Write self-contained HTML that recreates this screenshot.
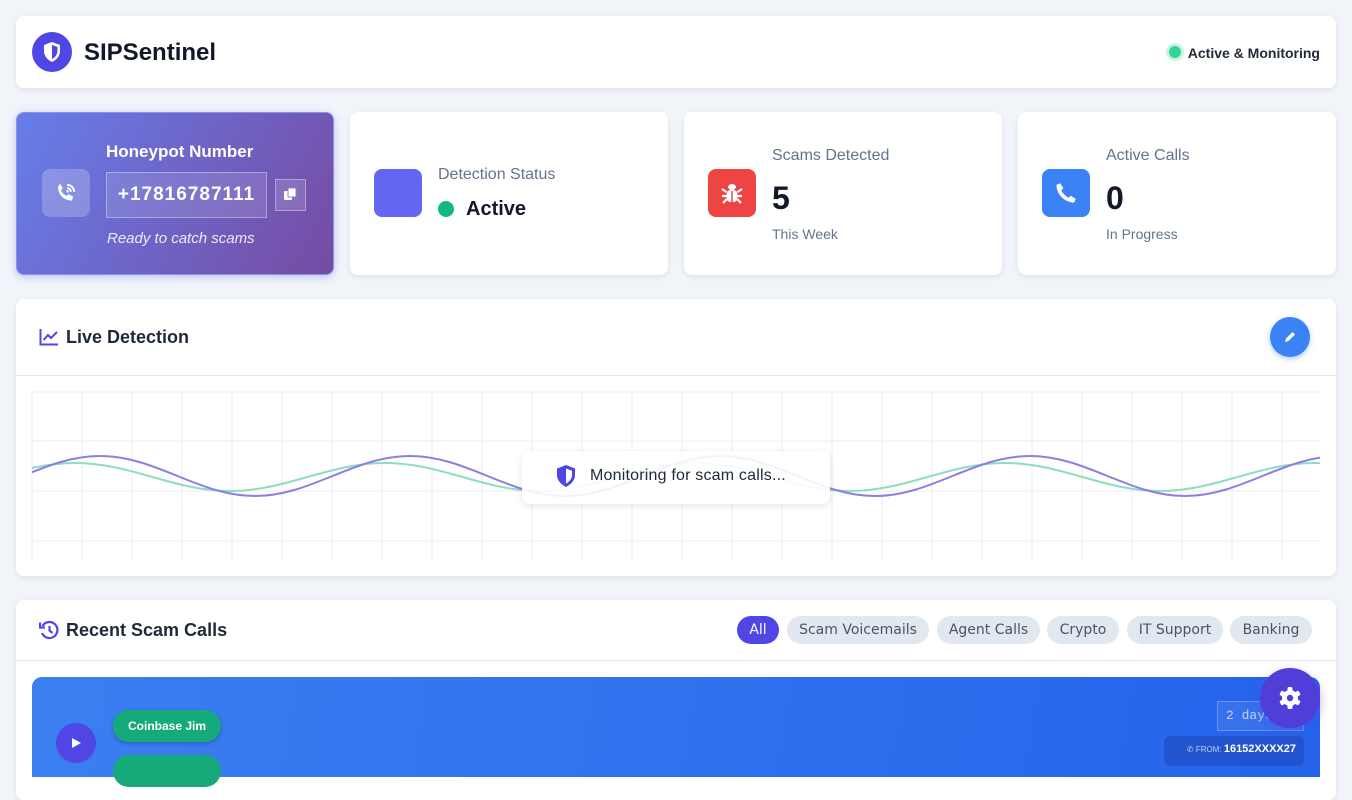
<!DOCTYPE html>
<html><head><meta charset="utf-8"><style>
*{box-sizing:border-box;margin:0;padding:0}
body{width:1352px;height:760px;overflow:hidden;background:#f1f4f9;font-family:"Liberation Sans",sans-serif;position:relative;color:#111827}
.a{position:absolute}
.card{position:absolute;background:#fff;border-radius:8px;box-shadow:0 2px 6px rgba(15,23,42,.08)}
.pill{position:absolute;top:616px;height:28px;border-radius:14px;background:#e2e8f0;color:#475569;font-family:"DejaVu Sans",sans-serif;font-size:14px;line-height:28px;text-align:center}
.lbl{font-size:16px;color:#64748b}
.ib{position:absolute;width:48px;height:48px;border-radius:8px}
</style></head><body>
<div class="card" style="left:16px;top:16px;width:1320px;height:72px"></div>
<div class="a" style="left:32px;top:32px;width:40px;height:40px;border-radius:50%;background:#4f46e5"></div>
<svg class="a" style="left:42px;top:41px" width="20" height="22" viewBox="0 0 20 22"><path d="M10 1 L18 4 V10 C18 15 14.5 19 10 21 C5.5 19 2 15 2 10 V4 Z" fill="#fff"/><path d="M10 4 L15.5 6 V10 C15.5 13.5 13 16.5 10 18 Z" fill="#4f46e5"/></svg>
<div class="a" style="left:84px;top:39px;font-size:24px;font-weight:bold;color:#111827">SIPSentinel</div>
<div class="a" style="left:1169px;top:46px;width:12px;height:12px;border-radius:50%;background:#34d399;box-shadow:0 0 0 3px rgba(52,211,153,.25)"></div>
<div class="a" style="left:1180px;top:45px;width:140px;text-align:right;font-size:14px;font-weight:bold;color:#1f2937">Active &amp; Monitoring</div>

<div class="a" style="left:16px;top:112px;width:318px;height:163px;border-radius:8px;background:linear-gradient(120deg,#667eea,#764ba2);box-shadow:0 2px 8px rgba(102,126,234,.4);border:1px solid #8b8ff0"></div>
<div class="a" style="left:42px;top:169px;width:48px;height:48px;border-radius:8px;background:rgba(255,255,255,.22)"></div>
<svg class="a" style="left:53px;top:180px" width="26" height="26" viewBox="0 0 24 24"><path d="M6.6 3.5 L9 7.5 L7.3 9.4 C8.3 11.8 10.2 13.7 12.6 14.8 L14.5 13 L18.5 15.4 L17.5 19 C10 19 4.8 13.8 4.6 6.4 Z" fill="#fff"/><path d="M13 4.5 A6.5 6.5 0 0 1 19.5 11 M13 7.5 A3.5 3.5 0 0 1 16.5 11" stroke="#fff" stroke-width="1.8" fill="none"/><circle cx="13.5" cy="10.5" r="1.1" fill="#fff"/></svg>
<div class="a" style="left:106px;top:142px;font-size:17px;font-weight:600;color:#fff">Honeypot Number</div>
<div class="a" style="left:106px;top:172px;width:161px;height:46px;border:1px solid rgba(255,255,255,.35);background:rgba(255,255,255,.12);color:#fff;font-size:19px;font-weight:bold;line-height:44px;text-align:center;letter-spacing:1px">+17816787111</div>
<div class="a" style="left:275px;top:179px;width:31px;height:32px;border:1px solid rgba(255,255,255,.35);background:rgba(255,255,255,.15)"></div>
<svg class="a" style="left:283px;top:187px" width="15" height="15" viewBox="0 0 15 15"><rect x="1" y="4" width="8" height="9" rx="1" fill="#fff"/><rect x="5" y="1" width="8" height="9" rx="1" fill="#fff" stroke="#8b7fd8" stroke-width="1"/></svg>
<div class="a" style="left:107px;top:230px;font-size:15px;font-style:italic;color:rgba(255,255,255,.88)">Ready to catch scams</div>

<div class="card" style="left:350px;top:112px;width:318px;height:163px"></div>
<div class="ib" style="left:374px;top:169px;background:#6366f1"></div>
<div class="a lbl" style="left:438px;top:166px">Detection Status</div>
<div class="a" style="left:438px;top:201px;width:16px;height:16px;border-radius:50%;background:#10b981"></div>
<div class="a" style="left:466px;top:198px;font-size:20px;font-weight:600;color:#111827">Active</div>

<div class="card" style="left:684px;top:112px;width:318px;height:163px"></div>
<div class="ib" style="left:708px;top:169px;background:#ef4444"></div>
<svg class="a" style="left:719px;top:180px" width="26" height="26" viewBox="0 0 26 26"><ellipse cx="13" cy="7" rx="4" ry="3" fill="#fff"/><rect x="7.5" y="10" width="11" height="12" rx="4" fill="#fff"/><path d="M3 9 L7.5 12 M3 16 H7.5 M4 23 L8 19 M23 9 L18.5 12 M23 16 H18.5 M22 23 L18 19" stroke="#fff" stroke-width="2.2"/><path d="M13 11 V22" stroke="#ef4444" stroke-width="1.5"/></svg>
<div class="a lbl" style="left:772px;top:147px">Scams Detected</div>
<div class="a" style="left:772px;top:180px;font-size:32px;font-weight:bold">5</div>
<div class="a" style="left:772px;top:226px;font-size:14px;color:#64748b">This Week</div>

<div class="card" style="left:1018px;top:112px;width:318px;height:163px"></div>
<div class="ib" style="left:1042px;top:169px;background:#3b82f6"></div>
<svg class="a" style="left:1053px;top:180px" width="26" height="26" viewBox="0 0 24 24"><path d="M6.5 3 L9.5 7.5 L7.6 9.6 C8.7 12 11 14.5 14.4 16.4 L16.5 14.5 L21 17.5 L19.5 20.8 C11 21 3 13 3.2 4.5 Z" fill="#fff"/></svg>
<div class="a lbl" style="left:1106px;top:147px">Active Calls</div>
<div class="a" style="left:1106px;top:180px;font-size:32px;font-weight:bold">0</div>
<div class="a" style="left:1106px;top:226px;font-size:14px;color:#64748b">In Progress</div>

<div class="card" style="left:16px;top:299px;width:1320px;height:277px"></div>
<div class="a" style="left:16px;top:375px;width:1320px;height:1px;background:#e5e7eb"></div>
<svg class="a" style="left:39px;top:328px" width="20" height="18" viewBox="0 0 20 18"><path d="M1.5 1 V16.5 H19" stroke="#4f46e5" stroke-width="2" fill="none"/><path d="M4.5 12 L9 7 L12 10 L18 4" stroke="#4f46e5" stroke-width="2" fill="none"/></svg>
<div class="a" style="left:66px;top:327px;font-size:18px;font-weight:600;color:#1f2937">Live Detection</div>
<div class="a" style="left:1270px;top:317px;width:40px;height:40px;border-radius:50%;background:#3b82f6;box-shadow:0 2px 6px rgba(59,130,246,.4)"></div>
<svg class="a" style="left:1283px;top:330px" width="14" height="14" viewBox="0 0 14 14"><path d="M2 12 L3 8.5 L9.5 2 L12 4.5 L5.5 11 Z" fill="#fff"/></svg>

<svg class="a" style="left:0;top:0" width="1352" height="760">
<defs><clipPath id="c"><rect x="32" y="392" width="1288" height="168"/></clipPath></defs>
<g stroke="#eceef2" stroke-width="1">
<path d="M32 392H1320M32 441H1320M32 491H1320M32 541H1320"/>
<path d="M32 392V560M82 392V560M132 392V560M182 392V560M232 392V560M282 392V560M332 392V560M382 392V560M432 392V560M482 392V560M532 392V560M582 392V560M632 392V560M682 392V560M732 392V560M782 392V560M832 392V560M882 392V560M932 392V560M982 392V560M1032 392V560M1082 392V560M1132 392V560M1182 392V560M1232 392V560M1282 392V560"/>
</g>
<g clip-path="url(#c)" fill="none" stroke-width="2">
<path stroke="#8fdcc0" d="M-80 491 C-23.5 491,18.5 463,75 463 C131.5 463,173.5 491,230 491 C286.5 491,328.5 463,385 463 C441.5 463,483.5 491,540 491 C596.5 491,638.5 463,695 463 C751.5 463,793.5 491,850 491 C906.5 491,948.5 463,1005 463 C1061.5 463,1103.5 491,1160 491 C1216.5 491,1258.5 463,1315 463 C1371.5 463,1413.5 491,1470 491"/>
<path stroke="#8b7fe0" d="M-55 496 C1.5 496,43.5 456,100 456 C156.5 456,198.5 496,255 496 C311.5 496,353.5 456,410 456 C466.5 456,508.5 496,565 496 C621.5 496,663.5 456,720 456 C776.5 456,818.5 496,875 496 C931.5 496,973.5 456,1030 456 C1086.5 456,1128.5 496,1185 496 C1241.5 496,1283.5 456,1340 456"/>
</g>
</svg>
<div class="a" style="left:522px;top:451px;width:308px;height:53px;border-radius:8px;background:rgba(255,255,255,.9);box-shadow:0 2px 8px rgba(15,23,42,.1)"></div>
<svg class="a" style="left:555px;top:464px" width="22" height="24" viewBox="0 0 22 24"><path d="M11 1 L20 4.5 V11 C20 16.5 16 20.5 11 23 C6 20.5 2 16.5 2 11 V4.5 Z" fill="#4f46e5"/><path d="M11 4.5 L17 6.8 V11 C17 14.5 14.5 17.5 11 19.5 Z" fill="#fff"/></svg>
<div class="a" style="left:590px;top:467px;font-size:16px;font-weight:500;color:#1f2937;letter-spacing:.2px">Monitoring for scam calls...</div>

<div class="card" style="left:16px;top:600px;width:1320px;height:200px"></div>
<div class="a" style="left:16px;top:660px;width:1320px;height:1px;background:#e5e7eb"></div>
<svg class="a" style="left:39px;top:620px" width="20" height="20" viewBox="0 0 20 20"><path d="M3.5 6 A8 8 0 1 1 3 13" stroke="#4f46e5" stroke-width="2.2" fill="none"/><path d="M1 2.5 V7.5 H6" stroke="#4f46e5" stroke-width="2.2" fill="none"/><path d="M10.5 6 V10.5 L13.5 13" stroke="#4f46e5" stroke-width="2.2" fill="none"/></svg>
<div class="a" style="left:66px;top:620px;font-size:18px;font-weight:600;color:#1f2937">Recent Scam Calls</div>
<div class="pill" style="left:737px;width:42px;background:#4f46e5;color:#fff">All</div>
<div class="pill" style="left:787px;width:142px">Scam Voicemails</div>
<div class="pill" style="left:937px;width:103px">Agent Calls</div>
<div class="pill" style="left:1047px;width:72px">Crypto</div>
<div class="pill" style="left:1127px;width:96px">IT Support</div>
<div class="pill" style="left:1230px;width:82px">Banking</div>

<div class="a" style="left:32px;top:677px;width:1288px;height:100px;border-radius:10px 10px 0 0;background:linear-gradient(100deg,#3b7ff0,#2563eb)"></div>
<div class="a" style="left:56px;top:723px;width:40px;height:40px;border-radius:50%;background:#4f46e5"></div>
<svg class="a" style="left:70px;top:737px" width="12" height="12" viewBox="0 0 12 12"><path d="M2 1 L11 6 L2 11 Z" fill="#fff"/></svg>
<div class="a" style="left:113px;top:710px;width:108px;height:32px;border-radius:16px;background:#16a97a;box-shadow:0 2px 4px rgba(0,0,0,.2);color:#fff;font-size:12px;font-weight:600;line-height:32px;text-align:center">Coinbase Jim</div>
<div class="a" style="left:113px;top:755px;width:108px;height:32px;border-radius:16px;background:#16a97a"></div>
<div class="a" style="left:1217px;top:701px;width:87px;height:30px;border:1px solid rgba(255,255,255,.25);background:rgba(255,255,255,.08);color:rgba(255,255,255,.7);font-family:'Liberation Mono',monospace;font-size:13px;line-height:28px;padding-left:8px">2 days</div>
<div class="a" style="left:1164px;top:736px;width:140px;height:30px;border-radius:6px;background:rgba(30,64,175,.45);color:#fff;font-size:11px;line-height:26px;text-align:right;padding-right:8px"><span style="font-size:8px;opacity:.7">✆ FROM: </span><b>16152XXXX27</b></div>
<div class="a" style="left:1260px;top:668px;width:60px;height:60px;border-radius:50%;background:#4f3fd8;box-shadow:0 4px 10px rgba(79,70,229,.4)"></div>
<svg class="a" style="left:1278px;top:686px" width="24" height="24" viewBox="0 0 24 24"><g fill="#fff"><circle cx="12" cy="12" r="8"/><rect x="9.5" y="1" width="5" height="22" rx="1.5"/><rect x="9.5" y="1" width="5" height="22" rx="1.5" transform="rotate(60 12 12)"/><rect x="9.5" y="1" width="5" height="22" rx="1.5" transform="rotate(120 12 12)"/></g><circle cx="12" cy="12" r="3.2" fill="#4f3fd8"/></svg>
</body></html>
